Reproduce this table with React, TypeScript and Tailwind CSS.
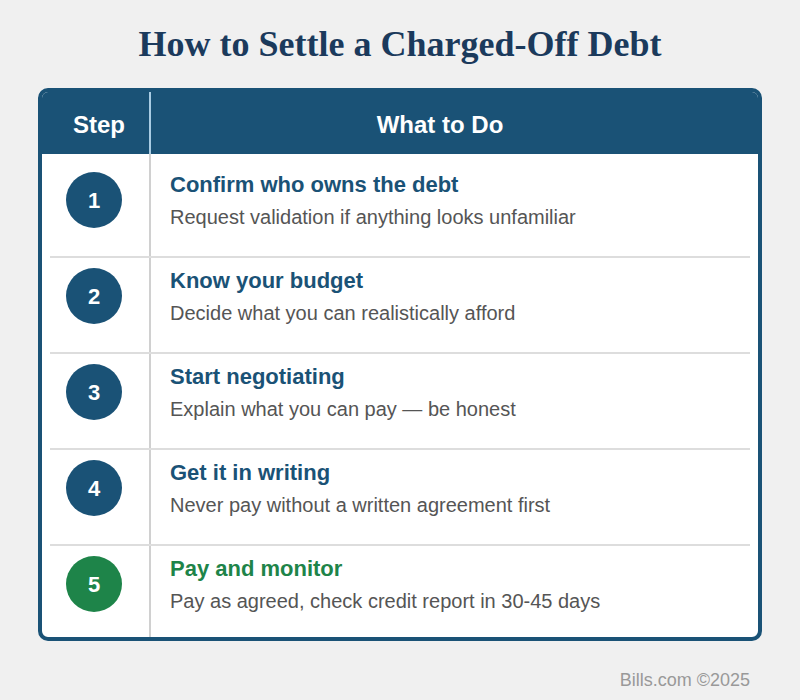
const steps = [
  { n: 1, title: "Confirm who owns the debt", text: "Request validation if anything looks unfamiliar" },
  { n: 2, title: "Know your budget", text: "Decide what you can realistically afford" },
  { n: 3, title: "Start negotiating", text: "Explain what you can pay — be honest" },
  { n: 4, title: "Get it in writing", text: "Never pay without a written agreement first" },
  { n: 5, title: "Pay and monitor", text: "Pay as agreed, check credit report in 30-45 days" },
];

const StepRow = ({ n, title, text, first, last }: { n: number; title: string; text: string; first: boolean; last: boolean }) => {
  const green = n === 5;
  return (
    <div className={`flex ${first ? "h-[102px]" : last ? "h-[91px]" : "h-[94px]"}`}>
      <div className={`w-[107px] flex justify-center pr-[3px] ${first ? "pt-[18px]" : "pt-[10px]"}`}>
        <div
          className={`w-[56px] h-[56px] rounded-full flex items-center justify-center text-white font-bold text-[22px] ${
            green ? "bg-[#1e8449]" : "bg-[#1a5276]"
          }`}
        >
          {n}
        </div>
      </div>
      <div className="w-[2px] bg-[#d0d0d0]" />
      <div className={`flex-1 pl-[19px] flex flex-col gap-[4px] ${first ? "pt-[17px]" : "pt-[9px]"}`}>
        <div className={`text-[22px] leading-[28px] font-bold ${green ? "text-[#1e8449]" : "text-[#1a5276]"}`}>{title}</div>
        <div className="text-[20px] leading-[28px] text-[#555555]">{text}</div>
      </div>
    </div>
  );
};

export default function App() {
  return (
    <div className="w-[800px] h-[700px] bg-[#f0f0f0] flex flex-col" style={{ fontFamily: '"Liberation Sans", Arial, sans-serif' }}>
      <h1
        className="pt-[22px] text-center text-[36px] leading-[44px] font-bold text-[#1b3a5c]"
        style={{ fontFamily: '"Liberation Serif", "Times New Roman", serif' }}
      >
        How to Settle a Charged-Off Debt
      </h1>
      <div className="mt-[22px] mx-[38px] w-[724px] border-4 border-[#1a5276] rounded-[10px] overflow-hidden bg-white">
        <div className="flex h-[62px] bg-[#1a5276] text-white font-bold text-[24px]">
          <div className="w-[107px] flex items-center justify-center pl-[7px] pt-[4px]">Step</div>
          <div className="w-[2px] bg-[#a9cce3]" />
          <div className="flex-1 flex items-center justify-center pr-[29px] pt-[4px]">What to Do</div>
        </div>
        {steps.map((s, i) => (
          <div key={s.n}>
            <StepRow {...s} first={i === 0} last={i === steps.length - 1} />
            {i < steps.length - 1 && (
              <div className="flex">
                <div className="w-[8px]" />
                <div className="flex-1 h-[2px] bg-[#dddddd]" />
                <div className="w-[8px]" />
              </div>
            )}
          </div>
        ))}
      </div>
      <div className="mt-[27px] pr-[50px] text-right text-[18px] leading-[24px] text-[#999999]">Bills.com ©2025</div>
    </div>
  );
}
